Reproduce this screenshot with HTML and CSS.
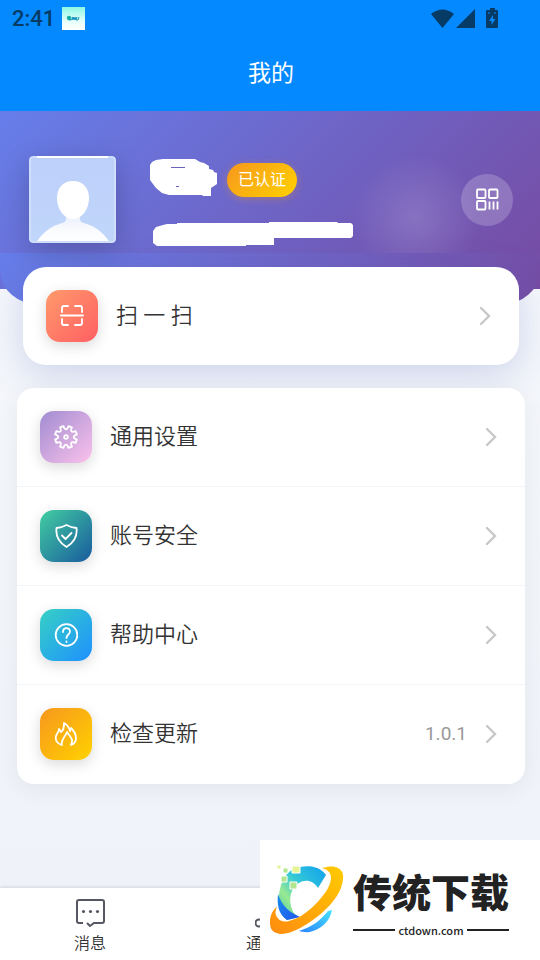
FILE: index.html
```html
<!DOCTYPE html>
<html lang="zh-CN">
<head>
<meta charset="utf-8">
<meta name="viewport" content="width=device-width, initial-scale=1">
<title>我的</title>
<link rel="stylesheet" href="styles.css">
</head>
<body>
<header class="top">
  <div class="status">
    <span class="clock">2:41</span>
    <svg class="app-badge" viewBox="0 0 23 23" aria-hidden="true">
      <defs><linearGradient id="badge" x1="0" y1="0" x2="0" y2="1"><stop offset="0" stop-color="#8cf8e6"/><stop offset=".6" stop-color="#e4fff8"/><stop offset="1" stop-color="#fff"/></linearGradient></defs>
      <path fill="url(#badge)" d="M0 0h23v23H0z"/>
      <circle cx="7" cy="11" r="2.2" fill="#18b0a4"/><path d="M7 13q3 1 4-3M10 10l1 3 1-3 1 3 1-3m1 0-1 3h2l1-3" fill="none" stroke="#1593bd" stroke-width="1"/>
    </svg>
    <svg class="signals" viewBox="0 0 70 22" aria-hidden="true">
      <path fill="#063b66" d="M0 6Q11.500-3 23 6L11.500 20zM44 1v19H25zM59 0h5v2h2q1 0 1 1v16q0 1-1 1H56q-1 0-1-1V3q0-1 1-1h3z"/>
      <path fill="#0489ff" d="M62 7l-4 6h2.500v4l4-6H62zM57 4.500h2v1h-2zM63 4.500h2v1h-2z"/>
    </svg>
  </div>
  <h1 class="title">我的</h1>
</header>

<main class="page">
  <section class="hero">
    <svg class="avatar" viewBox="0 0 87 87" role="img" aria-label="头像">
      <defs>
        <linearGradient id="body" x1="0" y1="0" x2="0" y2="1"><stop offset="0" stop-color="#e8eefb"/><stop offset=".6" stop-color="#fafbfe"/><stop offset="1" stop-color="#fff"/></linearGradient>
        <linearGradient id="sky" x1="0" y1="0" x2="0" y2="1"><stop offset="0" stop-color="#bcd0fa"/><stop offset="1" stop-color="#c1d6fa"/></linearGradient>
      </defs>
      <rect width="87" height="87" rx="4" fill="#cfdffb"/>
      <rect x="2" y="2" width="83" height="83" rx="2" fill="url(#sky)"/>
      <path d="M8 0h71v2H8z" fill="#fff"/>
      <path d="M37 58h14v5q0 3 4 4 15 4 25 18H8q10-14 25-18 4-1 4-4z" fill="url(#body)"/>
      <path d="M44 25c10 0 16 7 16 17 0 11-7 21-16 21s-16-10-16-21c0-10 6-17 16-17z" fill="#fff"/>
    </svg>
    <div class="profile">
      <div class="name-row">
        <svg class="name-mask" viewBox="0 0 67 37" aria-hidden="true">
          <path fill="#fff" d="M0 6l2-3 4-2 7-1h32l5 3 4 1 5 3v3l4 1 1 2 3 1v11l-3 2-3 2v8h-8l-1-1H19l-7-2-6-5-3-4-3-4z"/>
          <path d="M21 8.500h14M26 27.500h3" stroke="#6862bb"/>
        </svg>
        <span class="tag">已认证</span>
      </div>
      <svg class="id-mask" viewBox="0 0 200 24" aria-hidden="true"><path fill="#fff" d="M0 9l3-4 7-2 4-1h10V1h92V0h68l1 1h13l2 2v11l-2 2h-77v7H93v1H4l-4-3z"/></svg>
    </div>
    <button class="qr" type="button" aria-label="二维码">
      <svg viewBox="0 0 24 24" aria-hidden="true"><g fill="none" stroke="#fff" stroke-width="1.800"><rect x="2" y="1.500" width="8.500" height="8.500" rx="1"/><rect x="14" y="1.500" width="8.500" height="8.500" rx="1"/><rect x="2" y="13" width="8.500" height="8.500" rx="1"/><path d="M14.500 13.500v8M18.500 13.500v8M22.500 13.500v8"/></g></svg>
    </button>
  </section>
  <div class="curve"></div>

  <a class="row scan" href="#scan">
    <span class="tile coral"><svg viewBox="0 0 24 24" aria-hidden="true"><path d="M1 11.500h22M2 8V4q0-2 2-2h4M15 2h5q2 0 2 2v4M2 15v4q0 2 2 2h4M15 21h5q2 0 2-2v-4"/></svg></span>
    <span class="label">扫 一 扫</span>
    <svg class="chevron" viewBox="0 0 12 20" aria-hidden="true"><path d="M2 2l8 8-8 8"/></svg>
  </a>

  <nav class="list" aria-label="设置">
    <a class="row" href="#settings">
      <span class="tile violet"><svg viewBox="0 0 24 24" aria-hidden="true"><path d="M9.400 1.100Q12 7.500 14.600 1.100L17.900 2.400Q15.300 8.700 21.600 6.100L22.900 9.400Q16.500 12 22.900 14.600L21.600 17.900Q15.300 15.300 17.900 21.600L14.600 22.900Q12 16.500 9.400 22.900L6.100 21.600Q8.700 15.300 2.400 17.900L1.100 14.600Q7.500 12 1.100 9.400L2.400 6.100Q8.700 8.700 6.100 2.400Z"/><circle cx="12" cy="12" r="1.800"/></svg></span>
      <span class="label">通用设置</span>
      <svg class="chevron" viewBox="0 0 12 20" aria-hidden="true"><path d="M2 2l8 8-8 8"/></svg>
    </a>
    <a class="row" href="#security">
      <span class="tile green"><svg viewBox="0 0 24 24" aria-hidden="true"><path d="M12.500 1Q17 3.500 22.500 4q1.500 12-10 19Q1 16 2.500 4 8 3.500 12.500 1zM8 11.500l3.500 3.500 6-6"/></svg></span>
      <span class="label">账号安全</span>
      <svg class="chevron" viewBox="0 0 12 20" aria-hidden="true"><path d="M2 2l8 8-8 8"/></svg>
    </a>
    <a class="row" href="#help">
      <span class="tile blue"><svg viewBox="0 0 24 24" aria-hidden="true"><circle cx="12.500" cy="12" r="10.800"/><path d="M9 9c0-5 7-5 7-.5 0 3-3.500 3-3.500 6.500M12.500 18.500v.5"/></svg></span>
      <span class="label">帮助中心</span>
      <svg class="chevron" viewBox="0 0 12 20" aria-hidden="true"><path d="M2 2l8 8-8 8"/></svg>
    </a>
    <a class="row" href="#update">
      <span class="tile amber"><svg viewBox="0 0 24 24" aria-hidden="true"><path d="M8 23C3 22 1 18 2 14c1-3 3-4 3-7l2 3c3-2 3-5 3-9 4 2 5 4 6 8l1-3c4 4 5 6 5 10s-2 6-5 7c3-6-1-8-4-13-1 4-7 8-5 13z"/></svg></span>
      <span class="label">检查更新</span>
      <span class="version">1.0.1</span>
      <svg class="chevron" viewBox="0 0 12 20" aria-hidden="true"><path d="M2 2l8 8-8 8"/></svg>
    </a>
  </nav>
</main>

<nav class="tabs" aria-label="主导航">
  <a class="tab" href="#messages">
    <svg viewBox="0 0 30 30" aria-hidden="true"><path d="M8 25H4q-2 0-2-2V4q0-2 2-2h23q2 0 2 2v19q0 2-2 2h-8l-4 3-3-3" fill="none" stroke="#555763" stroke-width="2"/><g fill="#555763"><circle cx="8.500" cy="13.500" r="1.600"/><circle cx="15.500" cy="13.500" r="1.600"/><circle cx="22.500" cy="13.500" r="1.600"/></g></svg>
    <span>消息</span>
  </a>
  <a class="tab" href="#contacts">
    <svg viewBox="0 0 30 30" aria-hidden="true"><g fill="none" stroke="#555763" stroke-width="2"><circle cx="4" cy="25" r="3.500"/><circle cx="25" cy="25" r="3.500"/><circle cx="15" cy="6" r="4"/></g></svg>
    <span>通讯录</span>
  </a>
</nav>

<aside class="brand">
  <svg class="brand-logo" viewBox="0 0 76 72" aria-hidden="true">
    <defs>
      <linearGradient id="c1" x1="1" y1="0" x2="0" y2="1"><stop offset="0" stop-color="#10a0ee"/><stop offset=".45" stop-color="#35c9d6"/><stop offset=".7" stop-color="#98ea91"/><stop offset="1" stop-color="#42c3b0"/></linearGradient>
      <linearGradient id="c2" x1="0" y1="0" x2="1" y2="1"><stop offset="0" stop-color="#168dea"/><stop offset="1" stop-color="#2453ef"/></linearGradient>
      <linearGradient id="c3" x1="0" y1="1" x2="1" y2="0"><stop offset="0" stop-color="#ff8b10"/><stop offset="1" stop-color="#ffcb00"/></linearGradient>
      <linearGradient id="c4" x1="0" y1="1" x2="1" y2="0"><stop offset="0" stop-color="#2b82ff"/><stop offset="1" stop-color="#46e4ff"/></linearGradient>
    </defs>
    <path fill="url(#c1)" d="M31 3C42 1 51 3 57 11L49 24C44 16 36 15 30 19 22 24 20 33 22 42 23 47 26 51 30 53L18 56C9 48 8 34 12 21 15 11 21 5 31 3z"/>
    <path fill="url(#c2)" d="M9 30C13 42 20 48 31 53L18 56C9 50 8 40 9 30z"/>
    <path fill="url(#c4)" d="M63 46C61 57 53 64 44 67 39 69 34 68 30 67 43 63 52 56 59 47z"/>
    <path fill="url(#c3)" d="M53 4C58 3 62 2 66 3 72 4 75 9 74 15 73 25 68 33 61 41 51 52 36 63 21 68.500 16 70 11 70.500 7.500 69 2 67 1 63 1 58 1 52 3 47 8 42.500 6 48 6 50 8 53 11 58 16 58 20 57 36 53 50 38 58 26 62 19 64 11 59 7 57 5 55 5 53 4z"/>
    <g stroke="#fff" fill="#b1e590"><path fill="#e4f396" d="M23 2h8v7h-8z"/><path d="M14 4h5v5h-5zM12 12h6v6h-6zM21 18h7v7h-7z"/><path fill="#e4f396" d="M8 1h4v4H8z"/></g>
  </svg>
  <div class="brand-text">
    <strong>传统下载</strong>
    <span class="domain">ctdown.com</span>
  </div>
</aside>
</body>
</html>
```
FILE: styles.css
```css
* { box-sizing: border-box; }

body {
  margin: 0;
  min-height: 100vh;
  display: flex;
  flex-direction: column;
  position: relative;
  font-family: Roboto, "Noto Sans CJK SC", sans-serif;
  color: #333;
  background: linear-gradient(180deg, #f5f7fb 30%, #eef2f8 100%);
}

a { color: inherit; text-decoration: none; }
svg { display: block; flex: none; }

.top { background: #0489ff; color: #fff; }
.status {
  display: flex;
  align-items: center;
  height: 37px;
  padding: 0 39px 0 12px;
}
.clock {
  font-size: 22px;
  font-weight: 500;
  line-height: 36px;
  color: #063b66;
}
.app-badge { width: 23px; height: 23px; margin-left: 7px; }
.signals { width: 70px; height: 22px; margin-left: auto; }
.title {
  margin: 0;
  height: 74px;
  padding-left: 2px;
  font-size: 23px;
  font-weight: 400;
  line-height: 74px;
  text-align: center;
}

.page { flex: 1; }

.hero {
  display: flex;
  align-items: flex-start;
  height: 178px;
  padding: 45px 27px 0 29px;
  background:
    radial-gradient(circle at 77% 107px, rgba(255,255,255,.15), rgba(255,255,255,0) 64px),
    linear-gradient(135deg, #667eea 0%, #764ba2 100%);
}
.avatar {
  width: 87px;
  height: 87px;
  border-radius: 4px;
  box-shadow: 0 7px 28px rgba(0,0,0,.2);
}
.profile { flex: 1; padding: 3px 0 0 34px; }
.name-row { display: flex; align-items: flex-start; gap: 10px; }
.name-mask { width: 67px; height: 37px; }
.tag {
  margin-top: 4px;
  padding: 0 11px;
  border-radius: 17px;
  font-size: 16px;
  line-height: 34px;
  color: #fff;
  background: linear-gradient(135deg, #f7971e, #ffd200);
  box-shadow: 0 2px 8px rgba(247,151,30,.3);
}
.id-mask { width: 200px; height: 24px; margin: 25px 0 0 3px; }
.qr {
  display: grid;
  place-items: center;
  width: 52px;
  height: 52px;
  margin-top: 18px;
  padding: 0;
  border: 0;
  border-radius: 50%;
  background: rgba(255,255,255,.2);
}
.qr svg { width: 24px; height: 24px; }

.curve {
  height: 52px;
  margin-top: -36px;
  border-radius: 0 0 40px 40px / 0 0 35px 35px;
  background: linear-gradient(135deg, #667eea 0%, #764ba2 100%);
}

.row {
  display: flex;
  align-items: center;
  height: 99px;
  padding: 0 28px 0 23px;
  border-bottom: 1px solid #f0f5fa;
}
.row:last-child { border-bottom-color: transparent; }
.scan {
  position: relative;
  height: 98px;
  margin: -38px 21px 0 23px;
  padding: 0 28px 0 23px;
  border: 0;
  border-radius: 23px;
  background: #fff;
  box-shadow: 0 9px 36px rgba(80,100,190,.24);
}
.list {
  position: relative;
  margin: 23px 15px 0 17px;
  border-radius: 17px;
  background: rgba(255,255,255,.95);
  box-shadow: 0 5px 23px rgba(0,0,0,.06);
}

.tile {
  display: grid;
  place-items: center;
  width: 52px;
  height: 52px;
  border-radius: 14px;
  box-shadow: 0 4px 14px rgba(0,0,0,.15);
}
.tile svg {
  width: 24px;
  height: 24px;
  fill: none;
  stroke: #fff;
  stroke-width: 1.8;
  stroke-linecap: round;
  stroke-linejoin: round;
}
.coral { background: linear-gradient(135deg, #ff9a6c, #ff5f62); }
.violet { background: linear-gradient(135deg, #a18cd1, #fbc2eb); }
.green { background: linear-gradient(135deg, #43cea2, #185a9d); }
.blue { background: linear-gradient(135deg, #36d1c4, #1e90ff); }
.amber { background: linear-gradient(135deg, #f7971e, #ffd200); }

.label {
  flex: 1;
  padding-left: 18px;
  font-size: 22px;
  font-weight: 350;
  line-height: 32px;
}
.version {
  margin-right: 18px;
  font-size: 19px;
  line-height: 24px;
  color: #999;
}
.chevron {
  width: 12px;
  height: 20px;
  fill: none;
  stroke: #c8c8c8;
  stroke-width: 2.4;
  stroke-linecap: round;
}

.tabs {
  display: grid;
  grid-template-columns: repeat(3, 1fr);
  height: 72px;
  background: #fff;
  box-shadow: 0 -1px 3px rgba(0,0,0,.12);
}
.tab {
  display: flex;
  flex-direction: column;
  align-items: center;
  padding-top: 10px;
  font-size: 16px;
  font-weight: 350;
  line-height: 24px;
}
.tab svg { width: 30px; height: 30px; margin-bottom: 4px; }

.brand {
  position: absolute;
  right: 0;
  bottom: 0;
  display: flex;
  gap: 8px;
  padding: 24px 31px 0 9px;
  width: 280px;
  height: 120px;
  background: #fff;
  color: #222;
}
.brand-logo { width: 76px; height: 72px; }
.brand-text { flex: 1; min-width: 0; }
.brand strong {
  display: block;
  padding-bottom: 4px;
  font-family: "Noto Sans CJK SC", sans-serif;
  font-size: 39px;
  font-weight: 900;
  line-height: 52px;
  white-space: nowrap;
}
.domain {
  display: flex;
  align-items: center;
  gap: 3px;
  font-family: "Noto Sans CJK SC", sans-serif;
  font-size: 11px;
  font-weight: 500;
  line-height: 20px;
}
.domain::before, .domain::after {
  content: "";
  flex: 1;
  height: 2px;
  background: #222;
}
```
